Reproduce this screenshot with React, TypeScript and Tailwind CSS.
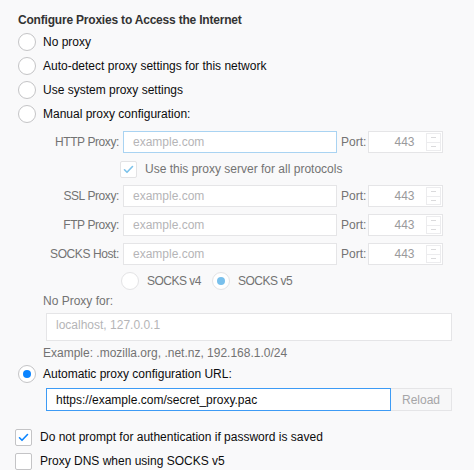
import React from 'react'

function Radio({ checked = false, disabled = false }: { checked?: boolean; disabled?: boolean }) {
  return (
    <span
      className={
        'flex h-[18px] w-[18px] shrink-0 items-center justify-center rounded-full border bg-white ' +
        (disabled ? 'border-[#e3e3e5]' : 'border-[#c4c4c6]')
      }
    >
      {checked && (
        <span className={'h-[8px] w-[8px] rounded-full ' + (disabled ? 'bg-[#79c0ec]' : 'bg-[#0a84ff]')} />
      )}
    </span>
  )
}

function Checkbox({ checked = false, disabled = false }: { checked?: boolean; disabled?: boolean }) {
  return (
    <span
      className={
        'flex h-[17px] w-[17px] shrink-0 items-center justify-center rounded-[2px] border bg-white ' +
        (disabled ? 'border-[#e3e3e5]' : 'border-[#c4c4c6]')
      }
    >
      {checked && (
        <svg width="11" height="9" viewBox="0 0 11 9" fill="none">
          <path
            d="M1.5 4.8 L4 7.3 L9.5 1.5"
            stroke={disabled ? '#7cc2ea' : '#0a84ff'}
            strokeWidth="1.6"
            strokeLinecap="round"
            strokeLinejoin="round"
          />
        </svg>
      )}
    </span>
  )
}

function ProxyRow({ label, focused = false }: { label: string; focused?: boolean }) {
  return (
    <div className="flex h-[22px] items-center">
      <span className="w-[101px] text-right tracking-[-0.4px] text-[#737373]">{label}</span>
      <div
        className={
          'ml-[4px] flex h-[22px] w-[214px] items-center border bg-white pl-[9px] text-[#b5b5b7] ' +
          (focused ? 'border-[#a9d3f2]' : 'border-[#e5e5e7]')
        }
      >
        example.com
      </div>
      <span className="ml-[4px] w-[27px] text-[#737373]">Port:</span>
      <div className="flex h-[22px] w-[75px] items-center border border-[#e5e5e7] bg-white">
        <span className="flex-1 pl-[14px] text-center text-[#9a9a9c]">443</span>
        <div className="mr-[1px] flex h-[18px] w-[15px] flex-col border border-[#ececee]">
          <div className="flex flex-1 items-center justify-center border-b border-[#ececee]">
            <span className="h-px w-[5px] bg-[#dadadc]" />
          </div>
          <div className="flex flex-1 items-center justify-center">
            <span className="h-px w-[5px] bg-[#dadadc]" />
          </div>
        </div>
      </div>
    </div>
  )
}

export default function App() {
  return (
    <div
      className="h-[470px] w-[474px] overflow-hidden bg-[#f9f9fa] pl-[15px] pt-[11px] text-[12px] leading-[16px] text-[#0c0c0d]"
      style={{ fontFamily: '"Liberation Sans", Arial, sans-serif' }}
    >
      <h1 className="mt-[1px] ml-[3px] h-[15px] font-bold tracking-[-0.2px] text-[#333]">
        Configure Proxies to Access the Internet
      </h1>

      <div className="mt-[3px] ml-[3px] flex flex-col">
        {['No proxy', 'Auto-detect proxy settings for this network', 'Use system proxy settings', 'Manual proxy configuration:'].map(
          t => (
            <label key={t} className="flex h-[24px] items-center gap-[7px]">
              <Radio />
              <span>{t}</span>
            </label>
          ),
        )}
      </div>

      <div className="mt-[5px] ml-[3px] flex flex-col">
        <ProxyRow label="HTTP Proxy:" focused />
        <div className="mt-[5px] flex h-[22px] items-center gap-[8px] pl-[102px] text-[#737373]">
          <Checkbox checked disabled />
          <span>Use this proxy server for all protocols</span>
        </div>
        <div className="mt-[5px] flex flex-col gap-[7px]">
          <ProxyRow label="SSL Proxy:" />
          <ProxyRow label="FTP Proxy:" />
          <ProxyRow label="SOCKS Host:" />
        </div>
        <div className="mt-[5px] flex h-[22px] items-center pl-[103px] text-[#737373]">
          <Radio disabled />
          <span className="ml-[8px] tracking-[-0.5px]">SOCKS v4</span>
          <span className="ml-[11px]">
            <Radio checked disabled />
          </span>
          <span className="ml-[8px] tracking-[-0.5px]">SOCKS v5</span>
        </div>
        <div className="mt-[1px] pl-[25px] text-[#737373]">No Proxy for:</div>
        <div className="mt-[4px] ml-[28px] h-[28px] w-[406px] border border-[#e5e5e7] bg-white pl-[9px] pt-[3px] text-[#b5b5b7]">
          localhost, 127.0.0.1
        </div>
        <div className="mt-[4px] pl-[25px] text-[#737373]">Example: .mozilla.org, .net.nz, 192.168.1.0/24</div>
      </div>

      <label className="mt-[1px] ml-[3px] flex h-[24px] items-center gap-[7px]">
        <Radio checked />
        <span>Automatic proxy configuration URL:</span>
      </label>
      <div className="mt-[2px] ml-[31px] flex h-[23px]">
        <div className="flex w-[345px] items-center border border-[#3d9bf5] bg-white pl-[9px] text-[#0c0c0d]">
          https://example.com/secret_proxy.pac
        </div>
        <div className="flex w-[61px] items-center justify-center border border-l-0 border-[#e5e5e7] bg-[#f7f7f8] text-[#a5a5a7]">
          Reload
        </div>
      </div>

      <div className="mt-[14px] flex flex-col">
        <label className="flex h-[24px] items-center gap-[8px]">
          <Checkbox checked />
          <span>Do not prompt for authentication if password is saved</span>
        </label>
        <label className="flex h-[24px] items-center gap-[8px]">
          <Checkbox />
          <span>Proxy DNS when using SOCKS v5</span>
        </label>
      </div>
    </div>
  )
}
